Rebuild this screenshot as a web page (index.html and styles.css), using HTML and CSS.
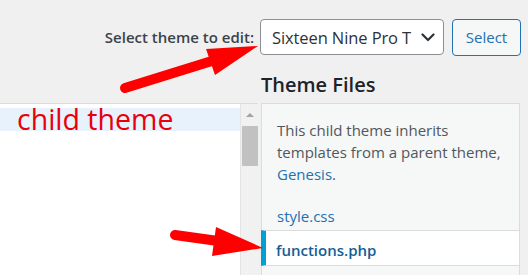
FILE: index.html
```html
<!DOCTYPE html>
<html lang="en">
<head>
<meta charset="utf-8">
<title>Edit Themes</title>
<link rel="stylesheet" href="styles.css">
</head>
<body>
<div class="page">
  <header class="toolbar">
    <label class="toolbar-label">Select theme to edit:</label>
    <div class="select">
      <span class="select-text">Sixteen Nine Pro T</span>
      <svg class="chevron" width="14" height="9" viewBox="0 0 14 9"><path d="M1.5 1.5 L7 7 L12.5 1.5" fill="none" stroke="#2c3338" stroke-width="2.2" stroke-linecap="round" stroke-linejoin="round"/></svg>
    </div>
    <button class="btn">Select</button>
  </header>
  <div class="layout">
    <div class="spacer"></div>
    <h2 class="files-title">Theme Files</h2>
    <div class="editor">
      <div class="code">
        <div class="line active"><span class="note">child theme</span></div>
      </div>
      <div class="scrollbar">
        <span class="sb-arrow"></span>
        <span class="sb-thumb"></span>
      </div>
    </div>
    <aside class="files">
      <p class="inherit">This child theme inherits templates from a parent theme, <a class="link" href="#">Genesis</a>.</p>
      <ul class="file-list">
        <li class="file"><a class="link" href="#">style.css</a></li>
        <li class="file current"><a class="link" href="#">functions.php</a></li>
      </ul>
    </aside>
  </div>
  <svg class="arrows" width="528" height="275" viewBox="0 0 528 275">
    <line x1="125" y1="88" x2="215" y2="60" stroke="#f00" stroke-width="10" stroke-linecap="round"/>
    <polygon points="206,49 258,46 215,75" fill="#f00"/>
    <line x1="175" y1="235" x2="218" y2="241" stroke="#f00" stroke-width="10" stroke-linecap="round"/>
    <polygon points="216,227 263,248 212,256" fill="#f00"/>
  </svg>
</div>
</body>
</html>
```

FILE: styles.css
```css
html, body {
  margin: 0;
  padding: 0;
}
body {
  background: #f0f0f1;
  font-family: "Open Sans", "Noto Sans", sans-serif;
  color: #3c434a;
  overflow: hidden;
}
.page {
  position: relative;
  width: 528px;
  height: 275px;
  overflow: hidden;
}
.toolbar {
  display: flex;
  justify-content: flex-end;
  align-items: center;
  padding: 19px 7px 0 0;
  height: 36px;
}
.toolbar-label {
  font-size: 15px;
  font-weight: 600;
  color: #3c434a;
  margin-right: 6px;
}
.select {
  box-sizing: border-box;
  width: 184px;
  height: 36px;
  border: 1px solid #8c8f94;
  border-radius: 4px;
  background: #fff;
  display: flex;
  align-items: center;
  padding: 0 8px 0 11px;
}
.select-text {
  flex: 1;
  min-width: 0;
  white-space: nowrap;
  font-size: 16.5px;
  letter-spacing: -0.1px;
  color: #2c3338;
  margin-right: 8px;
}
.chevron {
  display: block;
  flex: none;
}
.btn {
  box-sizing: border-box;
  width: 69px;
  height: 37px;
  margin-left: 8px;
  border: 1px solid #2271b1;
  border-radius: 4px;
  background: #f6f7f7;
  color: #2271b1;
  font-family: inherit;
  font-size: 15px;
  padding: 0;
}
.layout {
  display: grid;
  grid-template-columns: 258px 259px;
  column-gap: 3px;
  row-gap: 5px;
  margin-top: 16px;
}
.files-title {
  margin: 0;
  font-size: 20px;
  line-height: 27px;
  font-weight: 600;
  color: #1d2327;
}
.editor {
  display: flex;
  height: 180px;
  border-top: 1px solid #dcdcde;
}
.code {
  width: 240px;
  background: #fff;
  padding-top: 4px;
}
.line.active {
  height: 23px;
  background: #e8f2fc;
}
.note {
  display: block;
  padding-left: 17px;
  font-size: 28.5px;
  line-height: 23px;
  color: #e8000b;
  white-space: nowrap;
}
.scrollbar {
  position: relative;
  width: 18px;
  background: #f1f1f1;
  border-left: 1px solid #e4e4e4;
  box-sizing: border-box;
}
.sb-arrow {
  position: absolute;
  left: 5px;
  top: 9px;
  width: 0;
  height: 0;
  border-left: 4px solid transparent;
  border-right: 4px solid transparent;
  border-bottom: 4px solid #a3a3a3;
}
.sb-thumb {
  position: absolute;
  left: 1px;
  top: 22px;
  width: 16px;
  height: 40px;
  background: #c1c1c1;
}
.files {
  box-sizing: border-box;
  height: 180px;
  background: #f6f7f7;
  border: 1px solid #dcdcde;
  padding-top: 15px;
}
.inherit {
  margin: 0 0 9px;
  padding: 0 15px;
  font-size: 15px;
  line-height: 22px;
  color: #50575e;
}
.link {
  color: #2271b1;
  text-decoration: none;
}
.file-list {
  list-style: none;
  margin: 0 -1px;
  padding: 0;
}
.file {
  font-size: 15px;
  line-height: 22px;
  padding: 11px 16px 2px;
}
.file.current {
  background: #fff;
  border: 1px solid #dcdcde;
  border-left: 5px solid #00a0d2;
  margin-top: 1px;
  padding: 8px 15px 4px 10px;
}
.file.current .link {
  color: #135e96;
  font-weight: 600;
}
.arrows {
  position: absolute;
  left: 0;
  top: 0;
  pointer-events: none;
}
```
